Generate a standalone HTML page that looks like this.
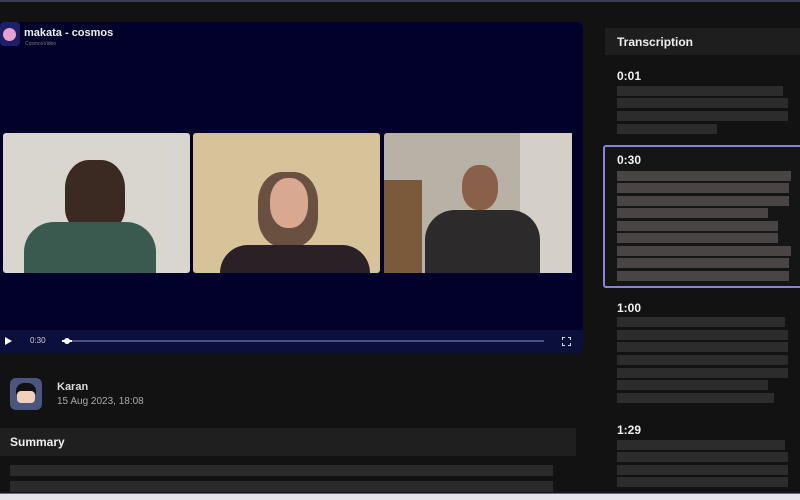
<!DOCTYPE html>
<html><head><meta charset="utf-8"><style>
*{margin:0;padding:0;box-sizing:border-box}
body{width:800px;height:500px;background:#121212;position:relative;overflow:hidden;font-family:"Liberation Sans",sans-serif;color:#fff}
div{position:absolute}
.b{background:#2c2c2c;height:10px;left:617px}
.s{background:#4a4545;height:10px;left:617px}
.t{font-weight:bold;font-size:12px;left:617px;color:#f2f2f2}
</style></head><body>
<div style="left:0;top:0;width:800px;height:2px;background:#3a3c50"></div>
<div style="left:0;top:22px;width:583px;height:331px;background:#01012c;border-radius:0 6px 6px 0"></div>
<div style="left:0;top:22px;width:20px;height:24px;background:#1d2066;border-radius:4px"></div>
<div style="left:3px;top:28px;width:13px;height:13px;border-radius:50%;background:#e8a0d0"></div>
<div style="left:24px;top:27px;font-size:11px;font-weight:bold;color:#eee">makata - cosmos</div>
<div style="left:25px;top:41px;font-size:5px;color:#777">CosmosVideo</div>
<div style="left:3px;top:133px;width:187px;height:140px;background:#d9d6cf;border-radius:3px"></div>
<div style="left:65px;top:160px;width:60px;height:70px;background:#3a2a22;border-radius:40% 40% 30% 30%"></div>
<div style="left:24px;top:222px;width:132px;height:51px;background:#3a5a50;border-radius:30px 30px 0 0"></div>
<div style="left:193px;top:133px;width:187px;height:140px;background:#d6c39a;border-radius:3px"></div>
<div style="left:258px;top:172px;width:60px;height:75px;background:#6a5040;border-radius:40%"></div>
<div style="left:270px;top:178px;width:38px;height:50px;background:#d8a890;border-radius:45%"></div>
<div style="left:220px;top:245px;width:150px;height:28px;background:#2a2025;border-radius:30px 30px 0 0"></div>
<div style="left:384px;top:133px;width:188px;height:140px;background:#b8b2a6;border-radius:3px"></div>
<div style="left:384px;top:180px;width:38px;height:93px;background:#7a5a3a"></div>
<div style="left:520px;top:133px;width:52px;height:140px;background:#d4d0c8"></div>
<div style="left:462px;top:165px;width:36px;height:45px;background:#8a6048;border-radius:45%"></div>
<div style="left:425px;top:210px;width:115px;height:63px;background:#2c2a2a;border-radius:30px 30px 0 0"></div>
<div style="left:0;top:330px;width:583px;height:23px;background:#0b0f3c;border-radius:0 0 6px 0"></div>
<div style="left:5px;top:337px;width:0;height:0;border-left:7px solid #fff;border-top:4.5px solid transparent;border-bottom:4.5px solid transparent"></div>
<div style="left:30px;top:336px;font-size:8px;color:#ccc">0:30</div>
<div style="left:62px;top:340px;width:482px;height:2px;background:#4a5080"></div>
<div style="left:62px;top:340px;width:10px;height:2px;background:#fff"></div>
<div style="left:64px;top:338px;width:6px;height:6px;border-radius:50%;background:#fff"></div>
<div style="left:562px;top:337px;width:9px;height:9px;border:1.5px dashed #ddd"></div>
<div style="left:10px;top:378px;width:32px;height:32px;background:#4a5580;border-radius:6px"></div>
<div style="left:16px;top:383px;width:20px;height:12px;background:#111;border-radius:8px 8px 2px 2px"></div>
<div style="left:17px;top:391px;width:18px;height:12px;background:#f0d0b8;border-radius:4px"></div>
<div style="left:57px;top:381px;font-size:11px;font-weight:bold;color:#ddd">Karan</div>
<div style="left:57px;top:396px;font-size:10px;color:#aaa">15 Aug 2023, 18:08</div>
<div style="left:0;top:428px;width:576px;height:28px;background:#1f1f1f"></div>
<div style="left:10px;top:435px;font-size:12px;font-weight:bold;color:#eee">Summary</div>
<div style="left:10px;top:465px;width:543px;height:11px;background:#2a2a2a"></div>
<div style="left:10px;top:481px;width:543px;height:11px;background:#2a2a2a"></div>
<div style="left:0;top:493px;width:800px;height:7px;background:#e4e4ea;border-top:1px solid #6a6c88"></div>
<div style="left:605px;top:28px;width:195px;height:27px;background:#1e1e1e"></div>
<div style="left:617px;top:35px;font-size:12px;font-weight:bold;color:#eee">Transcription</div>
<div class="t" style="top:69px">0:01</div>
<div class="b" style="top:86px;width:166px"></div>
<div class="b" style="top:98px;width:171px"></div>
<div class="b" style="top:111px;width:171px"></div>
<div class="b" style="top:124px;width:100px"></div>
<div style="left:603px;top:145px;width:200px;height:143px;border:2px solid #8a82e0;border-radius:3px;background:#151515"></div>
<div class="t" style="top:153px">0:30</div>
<div class="s" style="top:171px;width:174px"></div>
<div class="s" style="top:183px;width:172px"></div>
<div class="s" style="top:196px;width:172px"></div>
<div class="s" style="top:208px;width:151px"></div>
<div class="s" style="top:221px;width:161px"></div>
<div class="s" style="top:233px;width:161px"></div>
<div class="s" style="top:246px;width:174px"></div>
<div class="s" style="top:258px;width:172px"></div>
<div class="s" style="top:271px;width:172px"></div>
<div class="t" style="top:301px">1:00</div>
<div class="b" style="top:317px;width:168px"></div>
<div class="b" style="top:330px;width:171px"></div>
<div class="b" style="top:342px;width:171px"></div>
<div class="b" style="top:355px;width:171px"></div>
<div class="b" style="top:368px;width:171px"></div>
<div class="b" style="top:380px;width:151px"></div>
<div class="b" style="top:393px;width:157px"></div>
<div class="t" style="top:423px">1:29</div>
<div class="b" style="top:440px;width:168px"></div>
<div class="b" style="top:452px;width:171px"></div>
<div class="b" style="top:465px;width:171px"></div>
<div class="b" style="top:477px;width:171px"></div>
</body></html>
